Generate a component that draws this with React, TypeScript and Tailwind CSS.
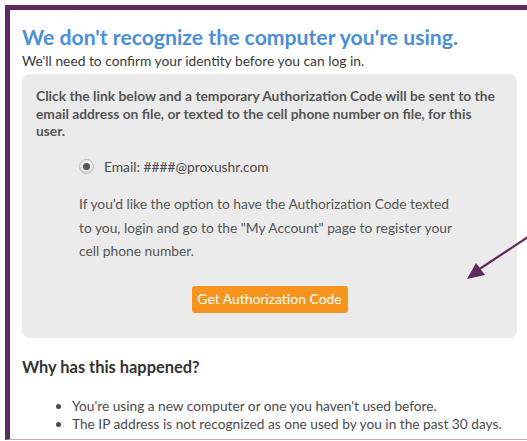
import React from "react";

const FONT = { fontFamily: "Lato, 'Open Sans', sans-serif" };

function Radio() {
  return (
    <span className="flex h-[15px] w-[15px] items-center justify-center rounded-full border border-[#b8b8b8] bg-[linear-gradient(#f4f4f4,#dcdcdc)]">
      <span className="h-[7px] w-[7px] rounded-full bg-[#555]" />
    </span>
  );
}

export default function App() {
  return (
    <div className="relative h-[441px] w-[527px] overflow-hidden bg-white text-[#4a4a4a]" style={FONT}>
      <div className="ml-[5px] mt-[5px] h-[435px] border-l-[5px] border-t-[5px] border-b border-[#5d2b5e] border-b-[#c7a9c8] pl-[12px]">
        <h1 className="mt-[13px] text-[21.2px] font-bold leading-[28px] text-[#4b8fd6]">
          We don't recognize the computer you're using.
        </h1>
        <p className="mt-[1px] text-[13.8px] leading-[17px] text-[#3a3a3a]">We'll need to confirm your identity before you can log in.</p>

        <div className="mt-[5px] w-[495px] rounded-[8px] bg-[#ebebeb] px-[14px] pb-[25px] pt-[13px]">
          <p className="text-[13.8px] font-bold leading-[17.5px] text-[#555]">
            Click the link below and a temporary Authorization Code will be sent to the email address on file, or texted to the cell phone number on file, for this user.
          </p>

          <div className="ml-[43px] mt-[17px] flex items-center gap-[10px] text-[13.8px] text-[#4a4a4a]">
            <Radio />
            <span>Email: ####@proxushr.com</span>
          </div>

          <p className="ml-[43px] mt-[15px] w-[385px] text-[13.8px] leading-[23.5px] text-[#555]">
            If you’d like the option to have the Authorization Code texted to you, login and go to the "My Account" page to register your cell phone number.
          </p>

          <div className="mt-[23px] flex justify-center">
            <button className="h-[27px] w-[156px] rounded-[3px] bg-[#f7941d] text-[13.9px] text-white">Get Authorization Code</button>
          </div>
        </div>

        <h2 className="mt-[19px] text-[16.4px] font-bold leading-[20px] text-[#333]">Why has this happened?</h2>

        <ul className="mt-[20px] list-disc pl-[50px] text-[13.7px] leading-[18px] text-[#4a4a4a]">
          <li>You're using a new computer or one you haven't used before.</li>
          <li>The IP address is not recognized as one used by you in the past 30 days.</li>
        </ul>
      </div>

      {/* callout arrow pointing at the button area */}
      <svg className="absolute left-[455px] top-[225px]" width="80" height="65" viewBox="0 0 80 65">
        <line x1="76" y1="10" x2="20" y2="47" stroke="#5d2b5e" strokeWidth="2.2" />
        <polygon points="12,54 21,38 30,50" fill="#5d2b5e" />
      </svg>
    </div>
  );
}
